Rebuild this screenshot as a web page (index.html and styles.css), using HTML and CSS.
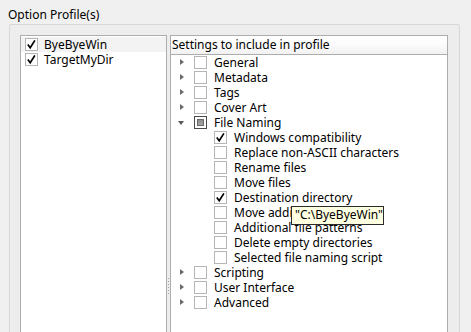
FILE: index.html
```html
<!DOCTYPE html>
<html>
<head>
<meta charset="utf-8">
<link rel="stylesheet" href="styles.css">
</head>
<body>
<div class="page">
  <div class="legend">Option Profile(s)</div>
  <div class="group">
    <div class="panels">
      <div class="list">
        <div class="lrow selected"><span class="cb checked"></span><span class="ltext">ByeByeWin</span></div>
        <div class="lrow"><span class="cb checked"></span><span class="ltext">TargetMyDir</span></div>
      </div>
      <div class="splitter"><span class="dots"></span></div>
      <div class="tree">
        <div class="header">Settings to include in profile</div>
        <div class="rows">
          <div class="row"><span class="arrow right"></span><span class="cb"></span><span class="t">General</span></div>
          <div class="row"><span class="arrow right"></span><span class="cb"></span><span class="t">Metadata</span></div>
          <div class="row"><span class="arrow right"></span><span class="cb"></span><span class="t">Tags</span></div>
          <div class="row"><span class="arrow right"></span><span class="cb"></span><span class="t">Cover Art</span></div>
          <div class="row"><span class="arrow down"></span><span class="cb partial"></span><span class="t">File Naming</span></div>
          <div class="row child"><span class="cb checked"></span><span class="t">Windows compatibility</span></div>
          <div class="row child"><span class="cb"></span><span class="t">Replace non-ASCII characters</span></div>
          <div class="row child"><span class="cb"></span><span class="t">Rename files</span></div>
          <div class="row child"><span class="cb"></span><span class="t">Move files</span></div>
          <div class="row child"><span class="cb checked"></span><span class="t">Destination directory</span></div>
          <div class="row child"><span class="cb"></span><span class="t">Move additional files</span></div>
          <div class="row child"><span class="cb"></span><span class="t">Additional file patterns</span></div>
          <div class="row child"><span class="cb"></span><span class="t">Delete empty directories</span></div>
          <div class="row child"><span class="cb"></span><span class="t">Selected file naming script</span></div>
          <div class="row"><span class="arrow right"></span><span class="cb"></span><span class="t">Scripting</span></div>
          <div class="row"><span class="arrow right"></span><span class="cb"></span><span class="t">User Interface</span></div>
          <div class="row"><span class="arrow right"></span><span class="cb"></span><span class="t">Advanced</span></div>
        </div>
      </div>
    </div>
  </div>
  <div class="tooltip">"C:\ByeByeWin"</div>
</div>
</body>
</html>
```
FILE: styles.css
```css
html, body {
  margin: 0;
  padding: 0;
  background: #f0f0f0;
  overflow: hidden;
}
.page {
  position: relative;
  width: 471px;
  height: 332px;
  overflow: hidden;
  font-family: "Noto Sans", "Open Sans", sans-serif;
  font-size: 12px;
  color: #000;
}
.legend {
  position: absolute;
  left: 8px;
  top: 7px;
  line-height: 16px;
  background: #f0f0f0;
}
.group {
  position: absolute;
  left: 9px;
  top: 24px;
  width: 451px;
  height: 340px;
  border: 1px solid #d8d8d8;
  border-radius: 2px;
  background: #ededed;
  padding: 10px 11px 0 10px;
  box-sizing: border-box;
}
.panels {
  display: flex;
  height: 330px;
}
.list {
  width: 147px;
  box-sizing: border-box;
  border: 1px solid #adadad;
  background: #fff;
  padding-top: 1px;
}
.lrow {
  height: 15px;
  display: flex;
  align-items: center;
  padding-left: 4px;
}
.lrow.selected {
  background: #f3f3f3;
}
.ltext {
  margin-left: 6px;
  line-height: 15px;
}
.splitter {
  width: 3px;
  position: relative;
}
.dots {
  position: absolute;
  left: 1px;
  top: 243px;
  width: 1px;
  height: 18px;
  background: repeating-linear-gradient(to bottom, #a0a0a0 0 1px, transparent 1px 3px);
}
.tree {
  width: 278px;
  box-sizing: border-box;
  border: 1px solid #adadad;
  background: #fff;
}
.header {
  height: 18px;
  line-height: 18px;
  padding-left: 1px;
  border-bottom: 1px solid #adadad;
  background: linear-gradient(to bottom, #ffffff 0%, #fbfbfb 50%, #f1f1f1 100%);
}
.row {
  height: 15px;
  display: flex;
  align-items: center;
  padding-left: 7px;
}
.row.child {
  padding-left: 43px;
}
.t {
  margin-left: 7px;
  line-height: 15px;
  white-space: nowrap;
}
.arrow {
  width: 16px;
  height: 15px;
  position: relative;
  flex: none;
}
.arrow.right::before {
  content: "";
  position: absolute;
  left: 2px;
  top: 4px;
  border-left: 4px solid #6a6a6a;
  border-top: 3.5px solid transparent;
  border-bottom: 3.5px solid transparent;
}
.arrow.down::before {
  content: "";
  position: absolute;
  left: 0;
  top: 6px;
  border-top: 4px solid #595959;
  border-left: 3.5px solid transparent;
  border-right: 3.5px solid transparent;
}
.cb {
  width: 13px;
  height: 13px;
  box-sizing: border-box;
  border: 1px solid #b5b5b5;
  background: #fff;
  position: relative;
  flex: none;
}
.cb.checked {
  background: #fff url("data:image/svg+xml;utf8,<svg xmlns='http://www.w3.org/2000/svg' width='11' height='11'><path d='M1.8 5.6 L4.2 8.8 L8.9 1.4' fill='none' stroke='black' stroke-width='1.7'/></svg>") no-repeat center;
}
.cb.partial {
  border-color: #4a4a4a;
}
.cb.partial::after {
  content: "";
  position: absolute;
  left: 2px;
  top: 2px;
  width: 7px;
  height: 7px;
  background: linear-gradient(to bottom, #888 0%, #a8a8a8 100%);
  box-shadow: inset 0 0 0 1px #6a6a6a;
}
.tooltip {
  position: absolute;
  left: 291px;
  top: 206px;
  width: 93px;
  height: 19px;
  box-sizing: border-box;
  border: 1px solid #2a2a2a;
  background: #ffffe1;
  padding-left: 3px;
  line-height: 16px;
  white-space: nowrap;
}
```
